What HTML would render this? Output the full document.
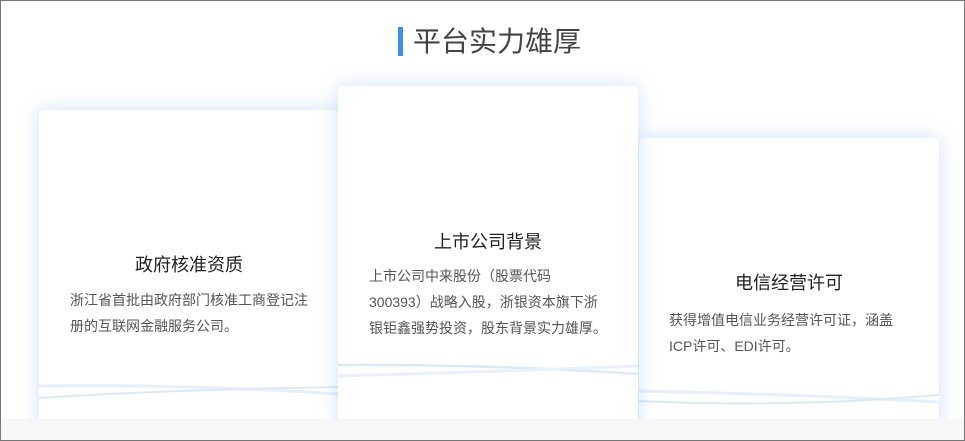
<!DOCTYPE html>
<html><head><meta charset="utf-8"><style>
html,body{margin:0;padding:0;}
body{width:965px;height:441px;position:relative;overflow:hidden;background:#fff;font-family:"Liberation Sans","Noto Sans CJK SC",sans-serif;}
.frame{position:absolute;left:0;top:0;width:963px;height:439px;border:1px solid #777;overflow:hidden;background:#fff;}
.bottom{position:absolute;left:0;top:418px;width:963px;height:21px;background:#f7f7f7;}
.title{position:absolute;left:397px;top:24px;height:32px;}
.title .bar{position:absolute;left:0;top:2px;width:5px;height:29px;background:#3a8ef6;}
.title span{position:absolute;left:15px;top:-5px;font-size:28px;color:#444;white-space:nowrap;letter-spacing:0;}
.card{position:absolute;background:#fff;border-radius:5px 5px 0 0;box-shadow:0 0 18px rgba(120,170,240,0.35);overflow:hidden;}
.card h3{position:absolute;left:0;width:100%;text-align:center;margin:0;font-weight:normal;font-size:18px;color:#222;}
.card p{position:absolute;margin:0;font-size:14px;line-height:26px;color:#555;white-space:nowrap;}
.card svg{position:absolute;left:0;width:100%;}
</style></head><body>
<div class="frame">
<div class="title"><div class="bar"></div><span>平台实力雄厚</span></div>
<div class="card" style="left:38px;top:109px;width:300px;height:320px;z-index:1">
<h3 style="top:141px">政府核准资质</h3>
<p style="left:31px;top:177px">浙江省首批由政府部门核准工商登记注<br>册的互联网金融服务公司。</p>
<svg style="top:260px" width="300" height="50"><path d="M0 16 Q150 14 300 24" stroke="#e6effa" stroke-width="3" fill="none"/><path d="M0 28 Q120 20 300 17" stroke="#dde9f8" stroke-width="2" fill="none"/></svg>
</div>
<div class="card" style="left:638px;top:137px;width:300px;height:292px;z-index:1">
<h3 style="top:131px">电信经营许可</h3>
<p style="left:30px;top:169px">获得增值电信业务经营许可证，涵盖<br>ICP许可、EDI许可。</p>
<svg style="top:248px" width="300" height="50"><path d="M0 5 Q150 8 300 16" stroke="#e6effa" stroke-width="3" fill="none"/><path d="M0 15 Q150 22 300 9" stroke="#dde9f8" stroke-width="2" fill="none"/></svg>
</div>
<div class="card" style="left:337px;top:85px;width:300px;height:344px;z-index:2">
<h3 style="top:142px">上市公司背景</h3>
<p style="left:31px;top:177px">上市公司中来股份（股票代码<br>300393）战略入股，浙银资本旗下浙<br>银钜鑫强势投资，股东背景实力雄厚。</p>
<svg style="top:268px" width="300" height="40"><path d="M0 11 Q150 10 300 20" stroke="#dde9f8" stroke-width="2.5" fill="none"/><path d="M0 22 Q150 18 300 12" stroke="#eaf1fb" stroke-width="3" fill="none"/></svg>
</div>
<div class="bottom" style="z-index:3"></div>
</div>
</body></html>
